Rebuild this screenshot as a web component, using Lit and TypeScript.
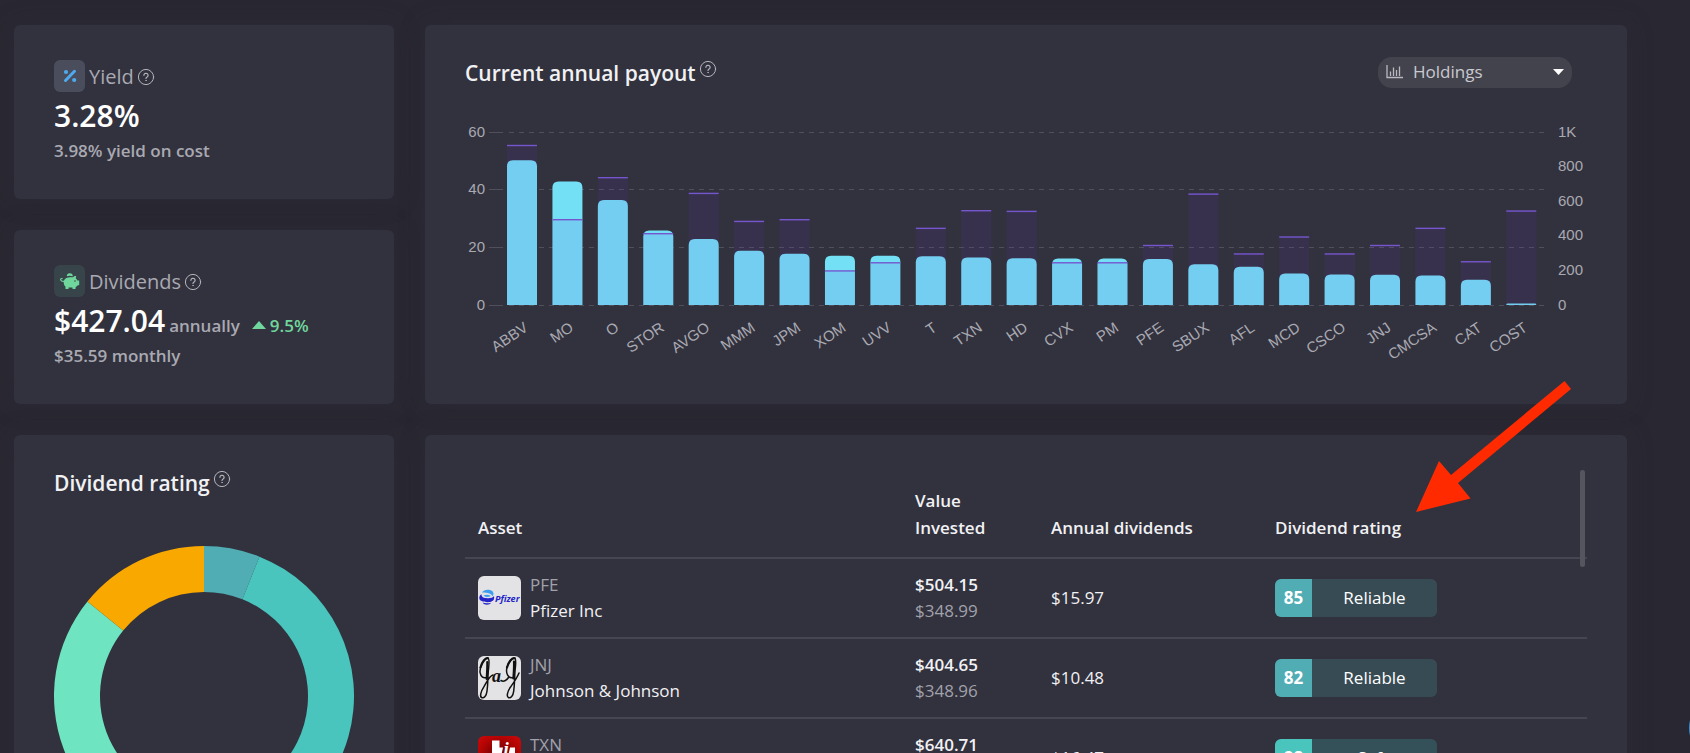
import { LitElement, html, svg, css, nothing } from "lit";
import { customElement, property } from "lit/decorators.js";

interface Payout {
  ticker: string;
  payout: number;
  invested: number;
}

const PAYOUTS: Payout[] = [
  { ticker: "ABBV", payout: 50.2, invested: 922 },
  { ticker: "MO", payout: 42.8, invested: 493 },
  { ticker: "O", payout: 36.4, invested: 736 },
  { ticker: "STOR", payout: 25.8, invested: 412 },
  { ticker: "AVGO", payout: 22.9, invested: 645 },
  { ticker: "MMM", payout: 18.8, invested: 483 },
  { ticker: "JPM", payout: 17.8, invested: 493 },
  { ticker: "XOM", payout: 17.1, invested: 197 },
  { ticker: "UVV", payout: 17.1, invested: 244 },
  { ticker: "T", payout: 16.9, invested: 443 },
  { ticker: "TXN", payout: 16.47, invested: 545 },
  { ticker: "HD", payout: 16.2, invested: 541 },
  { ticker: "CVX", payout: 16.1, invested: 244 },
  { ticker: "PM", payout: 16.1, invested: 244 },
  { ticker: "PFE", payout: 15.97, invested: 344 },
  { ticker: "SBUX", payout: 14.1, invested: 641 },
  { ticker: "AFL", payout: 13.3, invested: 295 },
  { ticker: "MCD", payout: 10.9, invested: 393 },
  { ticker: "CSCO", payout: 10.6, invested: 295 },
  { ticker: "JNJ", payout: 10.48, invested: 344 },
  { ticker: "CMCSA", payout: 10.2, invested: 443 },
  { ticker: "CAT", payout: 8.8, invested: 250 },
  { ticker: "COST", payout: 0.5, invested: 543 },
];

@customElement("help-icon")
export class HelpIcon extends LitElement {
  static styles = css`
    :host { display: inline-flex; flex: none; }
    .btn {
      width: 16px; height: 16px; padding: 0; margin: 0; border: 0; background: none;
      color: #b4b4bb; display: block; cursor: pointer;
    }
    .glyph { display: block; overflow: visible; }
  `;
  render() {
    return html`<button class="btn" aria-label="Help">
      <svg class="glyph" width="16" height="16" viewBox="0 0 16 16" fill="none" stroke="currentColor" stroke-linecap="round">
        <circle cx="8" cy="8" r="7.6" stroke-width="1"></circle>
        <path d="M5.9 6.3a2.1 2 0 1 1 3.2 1.7c-.8.5-1.1.8-1.1 1.5" stroke-width="1.2"></path>
        <circle cx="8" cy="11.5" r=".3" stroke-width=".8"></circle>
      </svg>
    </button>`;
  }
}

@customElement("payout-chart")
export class PayoutChart extends LitElement {
  static styles = css`
    :host { display: block; }
    .chart { display: block; width: 100%; height: auto; }
    .tick { font: 15px "Liberation Sans", Arial, sans-serif; fill: #a9a9b2; }
    .grid { stroke: #50505c; stroke-width: 1; stroke-dasharray: 5 5; }
    .axis { stroke: #50505c; stroke-width: 1; }
    .bar { fill: #73e0f5; }
    .area { fill: #7832d4; opacity: 0.1; }
    .cap { stroke: #7656cf; stroke-width: 1.4; }
  `;
  render() {
    const left = 34.3, right = 1079, top = 17, bottom = 190;
    const span = bottom - top;
    const step = (right - left) / PAYOUTS.length;
    const y = (v: number, max: number) => bottom - (v / max) * span;
    return html`<svg class="chart" viewBox="0 0 1122 252" role="img" aria-label="Current annual payout by holding">
      ${[0, 20, 40, 60].map((v) => {
        const ty = Math.floor(y(v, 60)) + 0.5;
        return svg`
          <line class="axis" x1="24" x2="38" y1=${ty} y2=${ty}></line>
          <line class="grid" x1="44" x2=${right} y1=${ty} y2=${ty}></line>
          <text class="tick" x="20" y=${ty + 4.5} text-anchor="end">${v}</text>`;
      })}
      ${[0, 200, 400, 600, 800, 1000].map((v) => svg`
        <text class="tick" x="1093" y=${y(v, 1000) + 4.5}>${v === 1000 ? "1K" : v}</text>`)}
      ${PAYOUTS.map((p, i) => {
        const cx = left + step * (i + 0.5);
        const x = cx - 15, by = y(p.payout, 60), iy = y(p.invested, 1000);
        const r = Math.min(6, bottom - by);
        return svg`
          <path class="bar" d="M${x} ${bottom}V${by + r}q0 ${-r} ${r} ${-r}h${30 - 2 * r}q${r} 0 ${r} ${r}V${bottom}z"></path>
          <rect class="area" x=${x} y=${iy} width="30" height=${bottom - iy}></rect>
          <line class="cap" x1=${x} x2=${x + 30} y1=${iy} y2=${iy}></line>
          <text class="tick" text-anchor="end" transform="translate(${cx + 7} 215) rotate(-34)">${p.ticker}</text>`;
      })}
    </svg>`;
  }
}

@customElement("rating-donut")
export class RatingDonut extends LitElement {
  static styles = css`
    :host { display: block; }
    .donut { display: block; width: 100%; height: auto; }
  `;
  private slice(from: number, to: number, color: string) {
    const at = (deg: number, r: number) => {
      const a = (deg * Math.PI) / 180;
      return `${150 + r * Math.sin(a)} ${150 - r * Math.cos(a)}`;
    };
    const big = to - from > 180 ? 1 : 0;
    return svg`<path fill=${color} d="M${at(from, 150)}A150 150 0 ${big} 1 ${at(to, 150)}L${at(to, 104)}A104 104 0 ${big} 0 ${at(from, 104)}z"></path>`;
  }
  render() {
    return html`<svg class="donut" viewBox="0 0 300 300" role="img" aria-label="Dividend rating breakdown">
      ${this.slice(0, 21.7, "#50adb4")}
      ${this.slice(21.7, 190, "#4ac5be")}
      ${this.slice(190, 309, "#6ee4c0")}
      ${this.slice(309, 360, "#f9a800")}
    </svg>`;
  }
}

@customElement("rating-badge")
export class RatingBadge extends LitElement {
  @property({ type: Number }) score = 0;
  @property() label = "";
  @property() tone = "reliable";
  static styles = css`
    :host { display: block; }
    .badge { display: flex; width: 162px; height: 38px; border-radius: 6px; overflow: hidden; line-height: 38px; text-align: center; color: #fff; }
    .score { width: 37px; font-weight: 700; background: #50adb4; }
    .label { flex: 1; background: #374b55; }
    .safe .score { background: #4ac5be; }
    .safe .label { background: #345058; }
  `;
  render() {
    return html`<div class="badge ${this.tone}"><span class="score">${this.score}</span><span class="label">${this.label}</span></div>`;
  }
}

const pfizer = svg`
  <rect width="43" height="44" fill="#e3e3e5"></rect>
  <path d="M4 16.500c1.500-2.500 5-3.200 8-2.400 3.600 1 4.300 4 2.700 6.200-1-2.500-4.500-3.800-10.700-3.800z" fill="#3f9df0"></path>
  <path d="M5.500 19.800c1.800-1.300 4.800-1.300 7.500.2-2.600 1.300-5 1.500-7.500-.2z" fill="#3f9df0"></path>
  <path d="M1.300 21.500c.2-1.400 1-2.500 2.200-3.200-.2 3 2.500 4 6.500 3.900 3 0 5-1 6-2.300.7 3-.5 4.800-2.600 5.700l-1 .4c-5.500.5-11.500-.4-11.100-4.500z" fill="#2424c8"></path>
  <path d="M4.500 26.600c2.500.9 5.500.9 8.700.2-1.500 2.400-6.700 3-8.700-.2z" fill="#2424c8"></path>
  <text x="17" y="26" font-family="Open Sans, sans-serif" font-size="9" font-weight="700" font-style="italic" fill="#2424c8">Pfizer</text>`;

const jnj = svg`
  <rect width="43" height="44" fill="#e3e3e5"></rect>
  <g fill="none" stroke="#111" stroke-linecap="round">
    <path d="M8.500 21.500C3 23 1 17 2.500 11.500 4 6 7.500 1.500 10 2.200c2 .8.800 7.800.3 13-.6 8-.3 13-1.300 20-.6 5-3 7-5 6.500-2.600-.8-1.300-6 1.700-10.500C8 27.500 11 20 15 19" stroke-width="1.500"></path>
    <path d="M2.500 11.500C4 6 7.500 1.500 10 2.200" stroke-width="2.200"></path>
    <path d="M35.500 21.500C30 23 27.500 17 29 11.500 30.500 6 34 1.500 36.700 2.200c2 .8.800 7.800.3 13-.6 8-.3 13-1.300 20-.6 5-3 7-5 6.500-2.600-.8-1.300-6 1.700-10.500C35 27.500 38.500 23 41 17" stroke-width="1.500"></path>
    <path d="M29 11.500C30.500 6 34 1.500 36.700 2.200" stroke-width="2.200"></path>
    <path d="M36 5.500c.3 6-.3 12-.6 17" stroke-width="2.200"></path>
    <path d="M9.300 6c.2 6-.3 11-.6 17" stroke-width="2.200"></path>
    <path d="M23 24.500c2.500 1.600 5.500.2 7.500-3" stroke-width="1.500"></path>
  </g>
  <text x="14" y="25.500" font-family="Liberation Serif, serif" font-size="18" font-weight="700" font-style="italic" fill="#111">a</text>`;

const txn = svg`
  <defs><radialGradient id="ti" cx=".5" cy=".5" r=".7"><stop offset="0" stop-color="#5a0000"></stop><stop offset=".7" stop-color="#b80404"></stop><stop offset="1" stop-color="#cc0a0a"></stop></radialGradient></defs>
  <rect width="43" height="44" fill="url(#ti)"></rect>
  <path d="M14 4.500h7.500v7h3.500l-1.500 7h7l1.500-7h5v12l-6 6-4 9-7-6-5-7-8-3v-4h7z" fill="#fff"></path>
  <text x="25.500" y="19" font-family="Liberation Serif, serif" font-size="19" font-weight="700" font-style="italic" fill="#fff">i</text>`;

const HOLDINGS = [
  { ticker: "PFE", name: "Pfizer Inc", value: "$504.15", cost: "$348.99", annual: "$15.97", score: 85, label: "Reliable", tone: "reliable", logo: pfizer },
  { ticker: "JNJ", name: "Johnson & Johnson", value: "$404.65", cost: "$348.96", annual: "$10.48", score: 82, label: "Reliable", tone: "reliable", logo: jnj },
  { ticker: "TXN", name: "Texas Instruments Inc", value: "$640.71", cost: "$545.12", annual: "$16.47", score: 98, label: "Safe", tone: "safe", logo: txn },
];

@customElement("app-root")
export class AppRoot extends LitElement {
  static styles = css`
    :host {
      display: block; position: relative; height: 100vh; overflow: hidden; box-sizing: border-box;
      background: #292832; color: #f1f1f4;
      font-family: "Open Sans", "Noto Sans", sans-serif; font-size: 17px; line-height: 27px;
    }
    .page {
      display: grid; grid-template-columns: 380px minmax(0, 1fr); gap: 31px;
      padding: 25px 63px 0 14px; align-items: stretch;
    }
    .stack { display: grid; gap: 31px; }
    .card { background: #32323e; border-radius: 6px; box-shadow: 0 0 24px rgba(50, 42, 56, 0.35); box-sizing: border-box; }
    .stat { padding: 35px 40px; }
    .stat-head { display: flex; align-items: center; gap: 4px; height: 32px; font-size: 20px; color: #a9a9b2; }
    .stat-head help-icon { padding-top: 2px; }
    .tile { width: 31px; height: 32px; border-radius: 6px; display: grid; place-items: center; background: #4a4d5b; }
    .tile.green { background: #374449; }
    .stat-value { display: flex; align-items: baseline; height: 42px; margin: 3px 0 0; line-height: 42px; font-weight: 600; color: #a9a9b2; }
    .big { font-size: 30px; color: #fff; }
    .unit { margin-left: 4px; }
    .gain { display: flex; align-items: baseline; gap: 4px; margin-left: 12px; color: #70d79c; }
    .sub { margin: 0; font-weight: 600; color: #a9a9b2; }
    .title { display: flex; align-items: flex-start; gap: 4px; margin: 0; font-size: 21px; line-height: 33px; font-weight: 600; color: #f1f1f4; }
    .title help-icon { padding-top: 4px; }
    .payout { padding: 32px 40px 0; height: 379px; }
    .payout-head { display: flex; justify-content: space-between; height: 31px; padding-right: 15px; margin-bottom: 27px; }
    .picker { position: relative; display: block; width: 194px; height: 31px; color: #c9c9cf; }
    .picker select {
      appearance: none; width: 100%; height: 31px; padding: 0 30px 2px 35px; border: 0; border-radius: 14px;
      background: #43434d; color: inherit; font: inherit; line-height: 27px;
    }
    .picker-icon, .picker-caret { position: absolute; pointer-events: none; top: 8px; left: 8px; }
    .picker-caret { left: auto; right: 8px; top: 12px; }
    .rating { padding: 32px 40px 40px; }
    .rating rating-donut { margin-top: 46px; }
    .holdings { position: relative; padding: 35px 40px; }
    .table { width: 100%; border-collapse: separate; border-spacing: 0; table-layout: fixed; }
    .c-asset { width: 437px; }
    .c-value { width: 136px; }
    .c-annual { width: 224px; }
    th { text-align: left; vertical-align: bottom; font-weight: 600; padding: 17px 13px 16px; border-bottom: 2px solid #464652; }
    td { height: 54px; padding: 12px 13px; border-bottom: 2px solid #464652; vertical-align: middle; line-height: 26px; }
    .asset { display: flex; align-items: center; gap: 9px; }
    .logo { width: 43px; height: 44px; border-radius: 6px; display: block; overflow: hidden; flex: none; }
    .line { display: block; white-space: nowrap; }
    .muted { color: #a1a1ab; }
    .strong { font-weight: 600; }
    .thumb { position: absolute; top: 35px; right: 42px; width: 5px; height: 97px; border-radius: 3px; background: #555560; }
    .arrow { position: absolute; top: 381px; right: 119px; pointer-events: none; }
    .chat { position: absolute; top: 698px; right: -59px; width: 60px; height: 60px; border: 0; border-radius: 50%; background: #3a8fd6; }
  `;

  render() {
    return html`
      <main class="page">
        <div class="stack">
          <section class="card stat">
            <div class="stat-head">
              <span class="tile"><svg width="14" height="14" viewBox="0 0 14 14" fill="#4fa9ee">
                <path d="M2.500 11.500 11.500 2.300" stroke="#4fa9ee" stroke-width="3" stroke-linecap="round"></path>
                <circle cx="3" cy="3" r="2.100"></circle><circle cx="11.200" cy="11" r="2.100"></circle></svg></span>
              <span>Yield</span><help-icon></help-icon>
            </div>
            <p class="stat-value"><span class="big">3.28%</span></p>
            <p class="sub">3.98% yield on cost</p>
          </section>
          <section class="card stat">
            <div class="stat-head">
              <span class="tile green"><svg width="20" height="18" viewBox="0 0 20 18" fill="#70d79c">
                <path d="M6.800 4.200a3 3 0 0 1 6 0 12 12 0 0 0-6 0z"></path>
                <path d="M4 8.500C5 6 7.500 5.200 10 5.200h3c.8-.9 1.900-1.400 3.200-1.300l-.5 2.400c.8.700 1.300 1.400 1.600 2.200h1.900v4.600l-2.200.7c-.5.700-1 1.200-1.500 1.600V17h-3v-1.500H8.500V17h-3v-2.300C4 13.500 3.200 11 4 8.500z"></path>
                <path d="M4.300 9.300c-2.100.3-3.800-.5-3.700-1.900.1-1 1.500-1.200 1.900-.4" fill="none" stroke="#70d79c" stroke-width="1.100"></path>
                <circle cx="15" cy="9" r=".8" fill="#374449"></circle></svg></span>
              <span>Dividends</span><help-icon></help-icon>
            </div>
            <p class="stat-value"><span class="big">$427.04</span><span class="unit">annually</span>
              <span class="gain"><svg width="14" height="11" viewBox="0 0 14 11" fill="#70d79c"><path d="M7 0l7 8H0z"></path></svg>9.5%</span></p>
            <p class="sub">$35.59 monthly</p>
          </section>
        </div>

        <section class="card payout">
          <div class="payout-head">
            <h2 class="title">Current annual payout<help-icon></help-icon></h2>
            <label class="picker">
              <svg class="picker-icon" width="17" height="14" viewBox="0 0 17 14" fill="none" stroke="#b9b9c0" stroke-width="1.300">
                <path d="M1 0v12.500h16M4.500 11V6.500M7.500 11V2.500M10.500 11V5M13.500 11V1.500" ></path></svg>
              <select aria-label="Group payout by"><option>Holdings</option><option>Sectors</option></select>
              <svg class="picker-caret" width="11" height="6" viewBox="0 0 11 6" fill="#fff"><path d="M0 0h11L5.500 6z"></path></svg>
            </label>
          </div>
          <payout-chart></payout-chart>
        </section>

        <section class="card rating">
          <h2 class="title">Dividend rating<help-icon></help-icon></h2>
          <rating-donut></rating-donut>
        </section>

        <section class="card holdings">
          <table class="table">
            <colgroup><col class="c-asset"><col class="c-value"><col class="c-annual"><col></colgroup>
            <thead><tr>
              <th>Asset</th>
              <th><span class="line">Value</span><span class="line">Invested</span></th>
              <th>Annual dividends</th>
              <th>Dividend rating</th>
            </tr></thead>
            <tbody>
              ${HOLDINGS.map((h) => html`<tr>
                <td><div class="asset">
                  <svg class="logo" viewBox="0 0 43 44" aria-hidden="true">${h.logo}</svg>
                  <div><span class="line muted">${h.ticker}</span><span class="line">${h.name}</span></div>
                </div></td>
                <td><span class="line strong">${h.value}</span><span class="line muted">${h.cost}</span></td>
                <td>${h.annual}</td>
                <td><rating-badge score=${h.score} label=${h.label} tone=${h.tone}></rating-badge></td>
              </tr>`)}
            </tbody>
          </table>
          <div class="thumb"></div>
        </section>
      </main>
      <svg class="arrow" width="155" height="131" viewBox="0 0 155 131" fill="#ff2a00" aria-hidden="true">
        <path d="M0 131 23 80 35 94 148.500 0 155 8 42 102 54.500 117.500z"></path>
      </svg>
      <button class="chat" aria-label="Open chat">${nothing}</button>
    `;
  }
}
